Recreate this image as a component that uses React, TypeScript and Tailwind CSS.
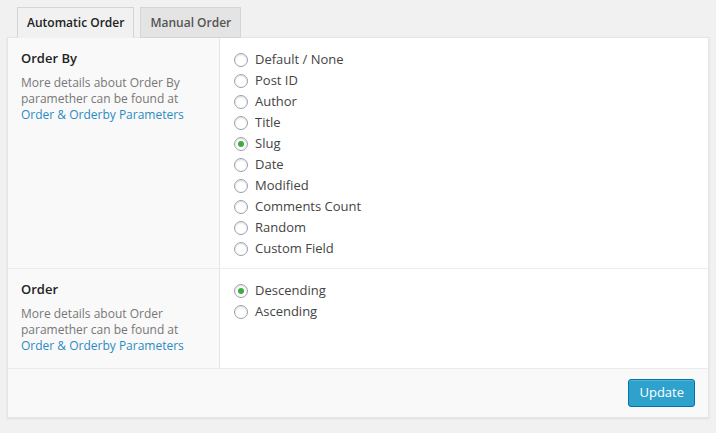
import { useState } from "react";

const ORDER_BY = [
  "Default / None",
  "Post ID",
  "Author",
  "Title",
  "Slug",
  "Date",
  "Modified",
  "Comments Count",
  "Random",
  "Custom Field",
];

const ORDER = ["Descending", "Ascending"];

function Radio({ label, checked, onClick }: { label: string; checked: boolean; onClick: () => void }) {
  return (
    <label className="flex items-center h-[21px] cursor-pointer" onClick={onClick}>
      <span className="w-[14px] h-[14px] rounded-full border border-[#9aa3ab] bg-white shadow-[inset_0_1px_2px_rgba(0,0,0,0.15)] flex items-center justify-center mr-[7px]">
        {checked && <span className="w-[6px] h-[6px] rounded-full bg-[#3bad3f]" />}
      </span>
      <span className="text-[13px] text-[#444]">{label}</span>
    </label>
  );
}

function Row({
  title,
  children,
  bordered,
}: {
  title: string;
  children: React.ReactNode;
  bordered?: boolean;
}) {
  return (
    <div className={`flex ${bordered ? "border-t border-[#ececec]" : ""}`}>
      <div className="w-[212px] shrink-0 bg-[#f9f9f9] border-r border-[#e5e5e5] px-[13px] pt-[10px] pb-[14px]">
        <div className="text-[13px] font-semibold text-[#222] leading-[20px]">{title}</div>
        <p className="mt-[7px] text-[12px] leading-[16px] text-[#777]">
          More details about {title}
          <br />
          paramether can be found at
          <br />
          <span className="text-[#2a8bc2]">Order &amp; Orderby Parameters</span>
        </p>
      </div>
      <div className="flex-1 bg-white pl-[14px] pt-[11px] pb-[9px]">{children}</div>
    </div>
  );
}

export default function App() {
  const [orderBy, setOrderBy] = useState("Slug");
  const [order, setOrder] = useState("Descending");
  const [tab, setTab] = useState(0);

  return (
    <div
      className="w-[716px] h-[433px] bg-[#f1f1f1] px-[7px] pt-[7px]"
      style={{ fontFamily: '"Open Sans", "Liberation Sans", sans-serif' }}
    >
      <div className="flex pl-[10px] gap-[6px] relative z-10">
        {["Automatic Order", "Manual Order"].map((t, i) => (
          <button
            key={t}
            onClick={() => setTab(i)}
            className={`h-[31px] px-[9px] text-[12px] font-semibold border border-[#d5d5d5] -mb-px ${
              tab === i
                ? "bg-[#f1f1f1] text-[#222] border-b-[#f1f1f1]"
                : "bg-[#e4e4e4] text-[#555]"
            }`}
          >
            {t}
          </button>
        ))}
      </div>
      <div className="border border-[#e5e5e5] shadow-[0_1px_2px_rgba(0,0,0,0.08)] bg-[#f9f9f9]">
        <Row title="Order By">
          {ORDER_BY.map((o) => (
            <Radio key={o} label={o} checked={orderBy === o} onClick={() => setOrderBy(o)} />
          ))}
        </Row>
        <Row title="Order" bordered>
          {ORDER.map((o) => (
            <Radio key={o} label={o} checked={order === o} onClick={() => setOrder(o)} />
          ))}
        </Row>
        <div className="border-t border-[#ececec] h-[49px] flex items-center justify-end pr-[13px]">
          <button className="h-[28px] px-[10px] rounded-[3px] bg-[#2ea2cc] border border-[#0074a2] text-white text-[13px] shadow-[inset_0_1px_0_rgba(120,200,230,0.5)]">
            Update
          </button>
        </div>
      </div>
    </div>
  );
}
